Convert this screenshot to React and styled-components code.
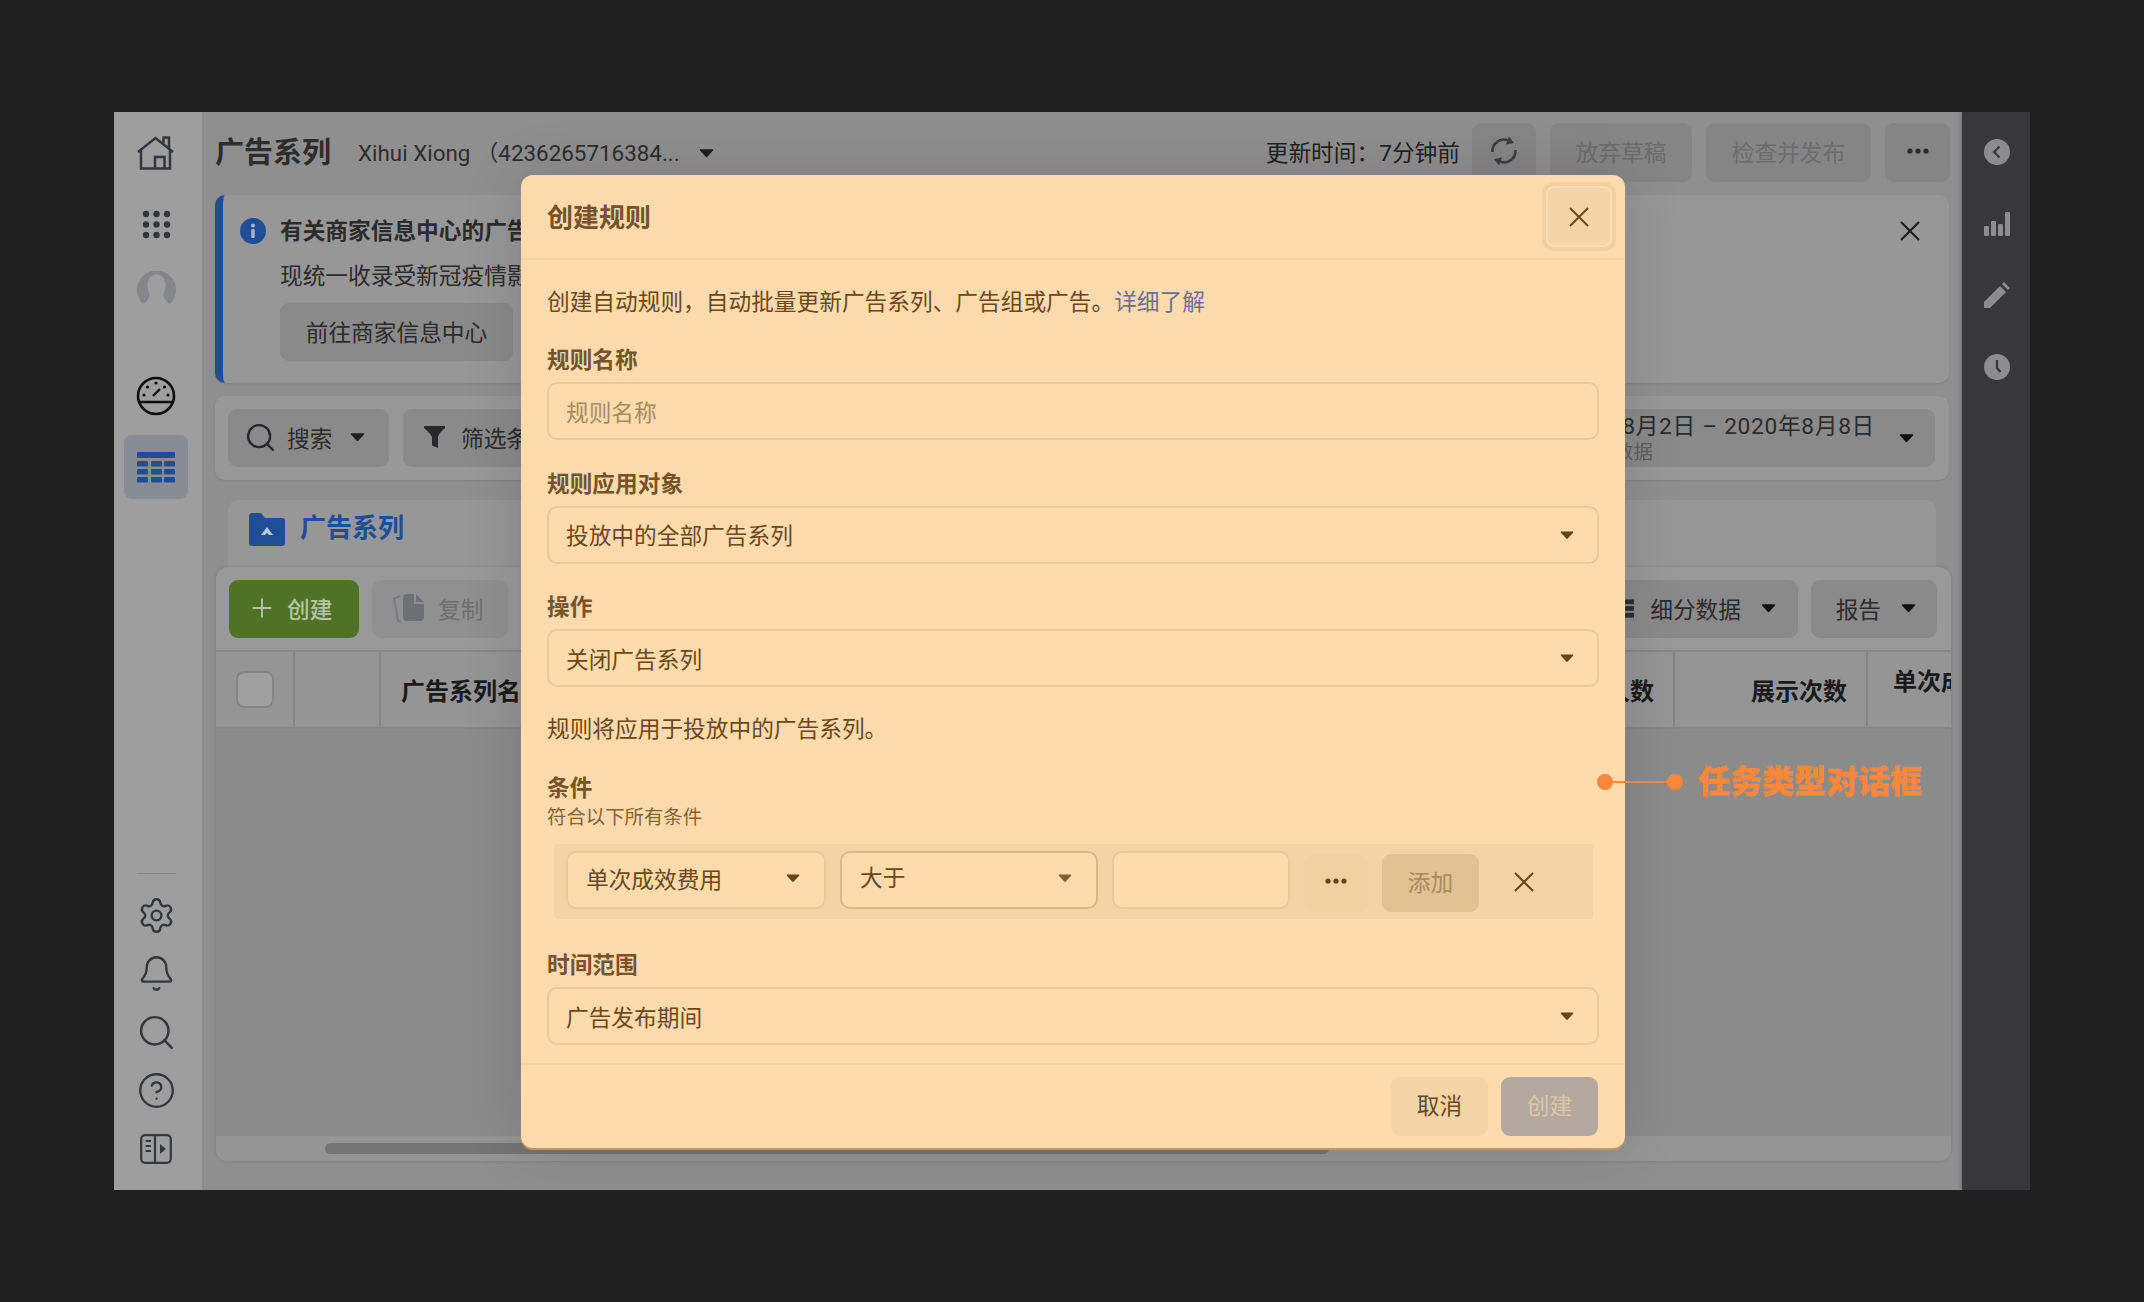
import React from "react";
import styled, { createGlobalStyle } from "styled-components";
import { Settings, Bell, Search, CircleHelp, Plus } from "lucide-react";

const Global = createGlobalStyle`
  html, body { margin: 0; padding: 0; background: #202020; }
  * { box-sizing: border-box; }
  body { font-family: Roboto, "Noto Sans CJK SC", sans-serif; }
`;

const Page = styled.div`
  width: 2144px; height: 1302px; background: #202020; padding: 112px 114px 0;
`;
const Screen = styled.div`
  position: relative; width: 1916px; height: 1078px; display: flex; overflow: hidden;
  background: #8f8f8f; font-size: 22.7px; color: #232323;
`;

/* left navigation */
const Sidebar = styled.nav`
  width: 90px; flex: none; display: flex; flex-direction: column; align-items: center;
  background: #9e9e9e; border-right: 2px solid #8c8c8c; padding: 18px 4px 18px 0;
`;
const NavItem = styled.div`
  width: 64px; height: ${p => p.$h || 46}px; margin-top: ${p => p.$mt || 0}px; flex: none;
  display: flex; align-items: center; justify-content: center; border-radius: 8px;
  background: ${p => (p.$active ? "#888c94" : "transparent")}; color: #33363b;
`;
const NavBottom = styled.div`
  margin-top: auto; display: flex; flex-direction: column; align-items: center; gap: 12.5px;
`;
const NavRule = styled.div`
  width: 39px; height: 1px; background: #888; margin-bottom: 6px;
`;

/* center column */
const Main = styled.main`
  flex: 1; min-width: 0; display: flex; flex-direction: column; padding: 0 13px 0 11px;
`;
const TopBar = styled.header`
  height: 83px; flex: none; display: flex; align-items: center; padding-bottom: 2px;
`;
const PageTitle = styled.h1`
  margin: 0; font-size: 29px; font-weight: 700; color: #2d2d2d; line-height: 1; position: relative; top: 1px;
`;
const Account = styled.span`
  margin-left: 27px; color: #2d2d2d; white-space: nowrap; padding-bottom: 4px; font-size: 22.4px;
`;
const AccountCaret = styled.span`
  margin-left: 19px; display: flex;
`;
const TopRight = styled.div`
  margin: 0 -1px 0 auto; display: flex; align-items: center; gap: 14px;
`;
const Updated = styled.span`
  white-space: nowrap; color: #1f1f1f; padding-bottom: 2px; margin-right: -2px;
`;
const TopButton = styled.button`
  height: 59px; width: ${p => p.$w}px; border: 0; border-radius: 9px; background: #858585;
  color: #6c6c6c; font: inherit; display: flex; align-items: center; justify-content: center; padding: 0 0 3px;
`;
const Banner = styled.section`
  position: relative; height: 188px; flex: none; display: flex; background: #979797;
  border-left: 8px solid #1f4e96; border-radius: 10px; padding: 18px 29px 0 17px;
  box-shadow: 0 1px 2px rgba(0,0,0,.1);
`;
const BannerInfo = styled.span`
  margin-top: 5px; flex: none;
`;
const BannerBody = styled.div`
  margin-left: 14px; display: flex; flex-direction: column; align-items: flex-start; flex: 1;
`;
const BannerTitle = styled.div`
  font-weight: 700; line-height: 34px; color: #2b2b2b; padding-top: 2px; height: 34px;
`;
const BannerText = styled.div`
  line-height: 34px; margin-top: 13px; color: #2b2b2b;
`;
const BannerClose = styled.span`
  margin-top: 7px;
`;
const GrayButton = styled.button`
  height: ${p => p.$h || 58}px; width: ${p => (p.$w ? p.$w + "px" : "auto")}; border: 0; border-radius: 9px;
  background: ${p => p.$bg || "#8a8a8a"}; color: ${p => p.$muted ? "#6e6e6e" : "#2b2b2b"}; font: inherit; flex: none;
  white-space: nowrap; justify-content: ${p => p.$justify || "flex-start"};
  display: flex; align-items: center; gap: ${p => p.$gap ?? 15}px; padding: 0 ${p => p.$pad ?? 20}px 2px ${p => p.$padL ?? p.$pad ?? 20}px;
`;
const BannerAction = styled(GrayButton)`
  margin-top: 9px; width: 233px; justify-content: center; padding: 0 0 2px;
`;
const ButtonCaret = styled.span`
  margin-left: ${p => p.$gap}px; display: flex;
`;
const FilterBar = styled.section`
  height: 84px; flex: none; margin-top: 13px; border-radius: 10px; background: #989898;
  display: flex; align-items: center; padding: 0 14px 0 13px; gap: 14px; box-shadow: 0 1px 2px rgba(0,0,0,.1);
`;
const DateButton = styled(GrayButton)`
  margin-left: auto; width: 380px; padding: 0 21px 0 0; justify-content: flex-end; gap: 24px;
`;
const DateStack = styled.div`
  display: flex; flex-direction: column; text-align: left; letter-spacing: .7px; padding-top: 2px;
`;
const DateMain = styled.span`
  line-height: 26px; white-space: nowrap;
`;
const DateSub = styled.span`
  font-size: 19.4px; line-height: 24px; color: #5e5e5e; letter-spacing: 0; margin-top: 1px;
`;
const Tab = styled.div`
  height: 67px; flex: none; margin: 20px 13px 0; border-radius: 10px 10px 0 0; background: #979797;
  display: flex; align-items: flex-start; padding: 13px 21px; gap: 15px;
`;
const TabLabel = styled.span`
  font-size: 26px; font-weight: 700; color: #1f4e96; line-height: 30px;
`;
const TablePanel = styled.section`
  height: 594px; flex: none; margin: 0 -2px 0 1px; border-radius: 12px; background: #999;
  display: flex; flex-direction: column; overflow: hidden; box-shadow: 0 0 3px rgba(0,0,0,.18);
`;
const Toolbar = styled.div`
  height: 85px; flex: none; display: flex; align-items: flex-start; padding: 13px 14px 0 13px; gap: 13px;
  border-bottom: 2px solid #858585;
`;
const CreateButton = styled(GrayButton)`
  background: #4e7326; color: #b5c4a4; width: 130px; font-weight: 500;
`;
const ToolbarRight = styled.div`
  margin-left: auto; display: flex; gap: 13px;
`;
const TableHead = styled.div`
  height: 77px; flex: none; display: flex; background: #959596; border-bottom: 2px solid #868686;
  font-size: 24px; font-weight: 700; color: #1a1a1a;
`;
const HeadCell = styled.div`
  width: ${p => p.$w}px; flex: none; height: 100%; display: flex; overflow: hidden; white-space: nowrap;
  border-right: ${p => (p.$last ? "0" : "2px solid #858585")};
  align-items: ${p => (p.$top ? "flex-start" : "center")};
  justify-content: ${p => p.$justify || "flex-start"};
  padding: ${p => p.$pad || "0"};
`;
const CheckBox = styled.div`
  width: 38px; height: 37px; border: 2px solid #848484; border-radius: 8px; background: #a0a0a0;
`;
const TableBody = styled.div`
  flex: 1; background: #8b8b8c;
`;
const ScrollRow = styled.div`
  height: 25px; flex: none; background: #959595; padding: 7px 0 0 109px;
`;
const ScrollThumb = styled.div`
  width: 1004px; height: 11px; border-radius: 6px; background: #747474;
`;

/* right rail */
const Rail = styled.aside`
  width: 68px; flex: none; background: #38383a; box-shadow: -2px 0 3px rgba(0,0,0,.15);
  display: flex; flex-direction: column; align-items: center; padding-top: 22px; gap: 35.5px;
`;
const RailIcon = styled.div`
  height: 36px; display: flex; align-items: center; justify-content: center; padding-left: 2px;
`;

/* dialog */
const Dialog = styled.div`
  position: absolute; left: 407px; top: 63px; width: 1104px; height: 973px; border-radius: 12px;
  background: #fedbad; color: #6c4719; display: flex; flex-direction: column;
  box-shadow: 0 2px 1px #c09a68, 0 0 60px rgba(0,0,0,.14);
`;
const DialogHead = styled.div`
  height: 85px; flex: none; display: flex; align-items: center; justify-content: space-between;
  padding: 0 13px 0 26px; border-bottom: 2px solid #f6d4a6;
`;
const DialogTitle = styled.h2`
  margin: 0 0 3px; font-size: 26px; font-weight: 700; color: #77522a;
`;
const CloseButton = styled.button`
  width: 66px; height: 61px; border: 2px solid #fcdfb4; border-radius: 8px; background: #f5d4a7; padding: 0; color: #6c4719;
  box-shadow: 0 0 0 4px #f3d0a2; display: flex; align-items: center; justify-content: center;
`;
const DialogBody = styled.div`
  flex: 1; display: flex; flex-direction: column; padding: 28px 26.5px 16px 26px;
`;
const Paragraph = styled.p`
  margin: ${p => p.$mt || 0}px 0 0; line-height: 30px; white-space: nowrap;
`;
const Link = styled.a`
  color: #67709a;
`;
const Label = styled.div`
  font-weight: 700; line-height: 30px; color: #77522a;
`;
const SubLabel = styled.div`
  font-size: 19.4px; line-height: 28px; color: #86623a;
`;
const Field = styled.div`
  margin-top: ${p => p.$mt ?? 28}px;
`;
const Control = styled.div`
  margin-top: 6px; width: ${p => p.$w ? p.$w + "px" : "100%"}; height: 58px; display: flex; align-items: center;
  justify-content: space-between; padding: 0 23px 0 17px; border: 2px solid ${p => p.$strong ? "#d9b987" : "#e9c998"}; border-radius: 10px;
  color: ${p => (p.$placeholder ? "#a98a5f" : "#6c4719")}; background: #fedbad;
`;
const Caret = styled.svg`
  flex: none; display: block;
`;
const ConditionPanel = styled.div`
  margin: 12px 6px 32px 7px; height: 75px; flex: none; background: #f4d4a7; border-radius: 4px;
  display: flex; align-items: flex-start; padding: 7px 12px; gap: 14px;
`;
const ConditionControl = styled(Control)`
  margin: 0; flex: none; padding: 0 24px 4px 18px;
`;
const RaisedText = styled.span`
  margin-top: -3px;
`;
const ConditionButton = styled.button`
  width: ${p => p.$w}px; height: 58px; margin-top: 3px; flex: none; border: 0; border-radius: 9px; padding: 0 0 4px;
  background: ${p => p.$bg}; color: ${p => p.$fg}; font: inherit; display: flex; align-items: center; justify-content: center;
`;
const RemoveIcon = styled.div`
  flex: none; margin: 19px 0 0 21px; height: 24px; display: flex; align-items: center;
`;
const DialogFoot = styled.div`
  height: 85px; flex: none; display: flex; justify-content: flex-end; gap: 13px; padding: 12px 27px 0;
  border-top: 2px solid #f6d4a6;
`;
const FootButton = styled.button`
  width: 97px; height: 59px; border: 0; border-radius: 9px; font: inherit; padding: 0 0 5px;
  background: ${p => p.$bg}; color: ${p => p.$fg};
`;

/* annotation */
const Callout = styled.div`
  position: absolute; left: 1483px; top: 646px; height: 48px; display: flex; align-items: center;
`;
const CalloutDot = styled.span`
  width: 16px; height: 16px; border-radius: 50%; background: #fb873b; flex: none;
`;
const CalloutLine = styled.span`
  width: 54px; height: 2px; background: #fb873b; flex: none;
`;
const CalloutText = styled.span`
  margin: 0 0 6px 15px; font-size: 32px; font-weight: 900; color: #fb873b; white-space: nowrap;
  -webkit-text-stroke: .4px #fb873b;
`;

const Cross = ({ size = 20, w = 2, color = "currentColor" }) => (
  <svg width={size} height={size} viewBox="0 0 20 20" fill="none" stroke={color} strokeWidth={w}>
    <path d="M1 1l18 18M19 1L1 19" />
  </svg>
);
const Down = ({ w = 15, h = 10, color = "currentColor" }) => (
  <Caret width={w} height={h} viewBox="0 0 15 10" fill={color} stroke={color} strokeWidth="1.5" strokeLinejoin="round">
    <path d="M1.5 2h12L7.5 8.5z" />
  </Caret>
);
const More = ({ color = "#2b2b2b" }) => (
  <svg width="22" height="6" viewBox="0 0 22 6" fill={color}>
    <circle cx="3" cy="3" r="2.6" /><circle cx="11" cy="3" r="2.6" /><circle cx="19" cy="3" r="2.6" />
  </svg>
);
const Home = () => (
  <svg width="38" height="36" viewBox="0 0 38 36" fill="none" stroke="#33363b" strokeWidth="2.5">
    <path d="M1 17L18.500 3 36 17M4 14v19.500h29V14M18 33.500V22h9.500v11.500M26.500 8V2.500H32V13" />
  </svg>
);
const Dots = () => (
  <svg width="29" height="29" viewBox="0 0 29 29" fill="#33363b">
    {[4, 14.5, 25].flatMap(y => [4, 14.5, 25].map(x => <circle key={x + "-" + y} cx={x} cy={y} r="3.2" />))}
  </svg>
);
const Avatar = () => (
  <svg width="39" height="34" viewBox="0 0 39 34">
    <path d="M6 33A19.500 19.500 0 1 1 33 33Q28 30 26 24 29 18 28.500 12 27 3.500 19.500 3.500 12 3.500 10.500 12 10 18 13 24 11 30 6 33z" fill="#85868a" />
  </svg>
);
const Gauge = () => (
  <svg width="40" height="40" viewBox="0 0 40 40" fill="none" stroke="#0c0c0c" strokeWidth="2.6">
    <circle cx="20" cy="20" r="18" />
    <path d="M3.500 26h33" />
    <path d="M17 20l7-7" strokeWidth="2.4" />
    <g fill="#0c0c0c" stroke="none">
      <circle cx="8" cy="19" r="1.600" /><circle cx="11.500" cy="11" r="1.600" /><circle cx="20" cy="7" r="1.600" />
      <circle cx="28.500" cy="11" r="1.600" /><circle cx="32" cy="19" r="1.600" />
    </g>
  </svg>
);
const TableGlyph = () => (
  <svg width="38" height="31" viewBox="0 0 38 31" fill="#1f4e96">
    <rect x="0" y="0" width="38" height="6" rx="1" />
    {[9, 17, 25].flatMap(y => [0, 14, 27].map(x => <rect key={x + "-" + y} x={x} y={y} width="11" height="5.5" rx="1" />))}
  </svg>
);
const PanelGlyph = () => (
  <svg width="32" height="30" viewBox="0 0 32 30" fill="none" stroke="#33363b" strokeWidth="2.2">
    <rect x="1.200" y="1.200" width="29.600" height="27.600" rx="4" />
    <path d="M15 1v28M5.500 7H11M5.500 12H11M5.500 17H11" />
    <path d="M20 10l6 5-6 5z" fill="#33363b" stroke="none" />
  </svg>
);
const Refresh = () => (
  <svg width="32" height="32" viewBox="0 0 32 32" fill="none" stroke="#3a3d42" strokeWidth="2.6">
    <path d="M4.500 17A11.500 11.500 0 0 1 21 5.800M27.500 15A11.500 11.500 0 0 1 11 26.200" />
    <path d="M21 1.500l5 6.500-8 1.500zM11 30.500l-5-6.500 8-1.500z" fill="#3a3d42" stroke="none" />
  </svg>
);
const Info = () => (
  <svg width="26" height="26" viewBox="0 0 26 26">
    <circle cx="13" cy="13" r="13" fill="#1f4e96" />
    <circle cx="13" cy="7.500" r="1.900" fill="#a8b8cf" />
    <rect x="11.300" y="11" width="3.400" height="9" rx="1" fill="#a8b8cf" />
  </svg>
);
const Funnel = () => (
  <svg width="23" height="24" viewBox="0 0 23 24" fill="#26282c">
    <path d="M1 1h21v2Q16 8 15 12v11l-6-2.500V12Q7 8 1 3z" />
  </svg>
);
const Folder = () => (
  <svg width="36" height="33" viewBox="0 0 36 33">
    <path d="M0 3a3 3 0 0 1 3-3h9l4 5h17a3 3 0 0 1 3 3v22a3 3 0 0 1-3 3H3a3 3 0 0 1-3-3z" fill="#1f4e96" />
    <path d="M18 14l6 8h-4l-2-2-2 2h-4z" fill="#b9c6d8" />
  </svg>
);
const CopyGlyph = () => (
  <svg width="33" height="30" viewBox="0 0 33 30">
    <path d="M8.500 3L2 5.500 6 28l3 1" fill="none" stroke="#7c7c80" strokeWidth="2.200" />
    <path d="M14 1h8v10h10v13a4 4 0 0 1-4 4H15a4 4 0 0 1-4-4V4a3 3 0 0 1 3-3z" fill="#6f7075" />
    <path d="M24 1l8 8h-8z" fill="#6f7075" />
  </svg>
);
const Rows = () => (
  <svg width="18" height="23" viewBox="0 0 18 23" fill="#2a2d32">
    <rect y="0" width="18" height="6" /><rect y="8.500" width="18" height="6" /><rect y="17" width="18" height="6" />
  </svg>
);
const RailBack = () => (
  <svg width="26" height="26" viewBox="0 0 26 26">
    <circle cx="13" cy="13" r="13" fill="#8d8d8f" />
    <path d="M15.500 7.500L10 13l5.500 5.500" fill="none" stroke="#38383a" strokeWidth="2.200" />
  </svg>
);
const RailBars = () => (
  <svg width="26" height="24" viewBox="0 0 26 24" fill="#8d8d8f">
    <rect x="0" y="14" width="5" height="10" rx="1" /><rect x="7" y="9" width="5" height="15" rx="1" />
    <rect x="14" y="12" width="5" height="12" rx="1" /><rect x="21" y="0" width="5" height="24" rx="1" />
  </svg>
);
const RailPencil = () => (
  <svg width="26" height="26" viewBox="0 0 26 26" fill="#8d8d8f">
    <path d="M0 26v-6L16 4l6 6L6 26zM18 2l2-2 6 6-2 2z" />
  </svg>
);
const RailClock = () => (
  <svg width="26" height="26" viewBox="0 0 26 26">
    <circle cx="13" cy="13" r="13" fill="#8d8d8f" />
    <path d="M13 6v8l3.500 4" fill="none" stroke="#38383a" strokeWidth="2.200" />
  </svg>
);

const Select = ({ children }) => (
  <Control>
    <span>{children}</span>
    <Down w={14} h={10} color="#694415" />
  </Control>
);

export default function App() {
  return (
    <Page>
      <Global />
      <Screen>
        <Sidebar>
          <NavItem><Home /></NavItem>
          <NavItem $mt={25}><Dots /></NavItem>
          <NavItem $mt={18}><Avatar /></NavItem>
          <NavItem $mt={62}><Gauge /></NavItem>
          <NavItem $mt={16} $h={64} $active><TableGlyph /></NavItem>
          <NavBottom>
            <NavRule />
            <NavItem><Settings size={39} strokeWidth={1.45} /></NavItem>
            <NavItem><Bell size={39} strokeWidth={1.45} /></NavItem>
            <NavItem><Search size={41} strokeWidth={1.45} /></NavItem>
            <NavItem><CircleHelp size={39} strokeWidth={1.45} /></NavItem>
            <NavItem><PanelGlyph /></NavItem>
          </NavBottom>
        </Sidebar>

        <Main>
          <TopBar>
            <PageTitle>广告系列</PageTitle>
            <Account>Xihui Xiong （4236265716384...</Account>
            <AccountCaret><Down color="#1f1f1f" /></AccountCaret>
            <TopRight>
              <Updated>更新时间：7分钟前</Updated>
              <TopButton $w={64}><Refresh /></TopButton>
              <TopButton $w={142}>放弃草稿</TopButton>
              <TopButton $w={165}>检查并发布</TopButton>
              <TopButton $w={65}><More /></TopButton>
            </TopRight>
          </TopBar>

          <Banner>
            <BannerInfo><Info /></BannerInfo>
            <BannerBody>
              <BannerTitle>有关商家信息中心的广告账户</BannerTitle>
              <BannerText>现统一收录受新冠疫情影响的账户</BannerText>
              <BannerAction>前往商家信息中心</BannerAction>
            </BannerBody>
            <BannerClose><Cross size={20} w={2.2} color="#1f1f1f" /></BannerClose>
          </Banner>

          <FilterBar>
            <GrayButton $w={161} $padL={16} $pad={10} $gap={10}>
              <Search size={33} strokeWidth={1.7} color="#26282c" /><span>搜索</span>
              <ButtonCaret $gap={8}><Down color="#1f1f1f" /></ButtonCaret>
            </GrayButton>
            <GrayButton $w={200}><Funnel /><span>筛选条件</span></GrayButton>
            <DateButton>
              <DateStack>
                <DateMain>2020年8月2日 – 2020年8月8日</DateMain>
                <DateSub>过去7天数据</DateSub>
              </DateStack>
              <Down color="#111" />
            </DateButton>
          </FilterBar>

          <Tab><Folder /><TabLabel>广告系列</TabLabel></Tab>

          <TablePanel>
            <Toolbar>
              <CreateButton $padL={18} $gap={10}><Plus size={30} strokeWidth={1.5} /><span>创建</span></CreateButton>
              <GrayButton $w={136} $muted $bg="#909090" $gap={13}><CopyGlyph /><span>复制</span></GrayButton>
              <ToolbarRight>
                <GrayButton $w={200} $pad={22} $gap={16} $justify="flex-end">
                  <Rows /><span>细分数据</span>
                  <ButtonCaret $gap={4}><Down color="#111" /></ButtonCaret>
                </GrayButton>
                <GrayButton $w={126} $pad={21} $gap={20} $justify="flex-end"><span>报告</span><Down color="#111" /></GrayButton>
              </ToolbarRight>
            </Toolbar>
            <TableHead>
              <HeadCell $w={79} $pad="0 0 0 20px"><CheckBox /></HeadCell>
              <HeadCell $w={86} />
              <HeadCell $w={1019} $pad="0 0 0 20px">广告系列名称</HeadCell>
              <HeadCell $w={275} $justify="flex-end" $pad="0 19px 0 0">覆盖人数</HeadCell>
              <HeadCell $w={193} $justify="flex-end" $pad="0 19px 0 0">展示次数</HeadCell>
              <HeadCell $w={120} $last $top $pad="10px 0 0 25px">单次成效费用</HeadCell>
            </TableHead>
            <TableBody />
            <ScrollRow><ScrollThumb /></ScrollRow>
          </TablePanel>
        </Main>

        <Rail>
          <RailIcon><RailBack /></RailIcon>
          <RailIcon><RailBars /></RailIcon>
          <RailIcon><RailPencil /></RailIcon>
          <RailIcon><RailClock /></RailIcon>
        </Rail>

        <Dialog>
          <DialogHead>
            <DialogTitle>创建规则</DialogTitle>
            <CloseButton><Cross /></CloseButton>
          </DialogHead>
          <DialogBody>
            <Paragraph>创建自动规则，自动批量更新广告系列、广告组或广告。<Link>详细了解</Link></Paragraph>
            <Field $mt={28}>
              <Label>规则名称</Label>
              <Control $placeholder>规则名称</Control>
            </Field>
            <Field $mt={29.5}>
              <Label>规则应用对象</Label>
              <Select>投放中的全部广告系列</Select>
            </Field>
            <Field $mt={29.5}>
              <Label>操作</Label>
              <Select>关闭广告系列</Select>
            </Field>
            <Paragraph $mt={28}>规则将应用于投放中的广告系列。</Paragraph>
            <Field $mt={29}>
              <Label>条件</Label>
              <SubLabel>符合以下所有条件</SubLabel>
            </Field>
            <ConditionPanel>
              <ConditionControl $w={260}><span>单次成效费用</span><Down w={14} h={10} color="#694415" /></ConditionControl>
              <ConditionControl $w={258} $strong><RaisedText>大于</RaisedText><Down w={14} h={10} color="#7f5f30" /></ConditionControl>
              <ConditionControl $w={178} />
              <ConditionButton $w={64} $bg="#f1d0a2" $fg="#694415"><More color="#694415" /></ConditionButton>
              <ConditionButton $w={97} $bg="#e2c193" $fg="#a98a5f">添加</ConditionButton>
              <RemoveIcon><Cross /></RemoveIcon>
            </ConditionPanel>
            <Field $mt={0}>
              <Label>时间范围</Label>
              <Select>广告发布期间</Select>
            </Field>
          </DialogBody>
          <DialogFoot>
            <FootButton $bg="#f5d4a7" $fg="#6c4719">取消</FootButton>
            <FootButton $bg="#b5a89e" $fg="#dcc8a6">创建</FootButton>
          </DialogFoot>
        </Dialog>

        <Callout>
          <CalloutDot />
          <CalloutLine />
          <CalloutDot />
          <CalloutText>任务类型对话框</CalloutText>
        </Callout>
      </Screen>
    </Page>
  );
}
